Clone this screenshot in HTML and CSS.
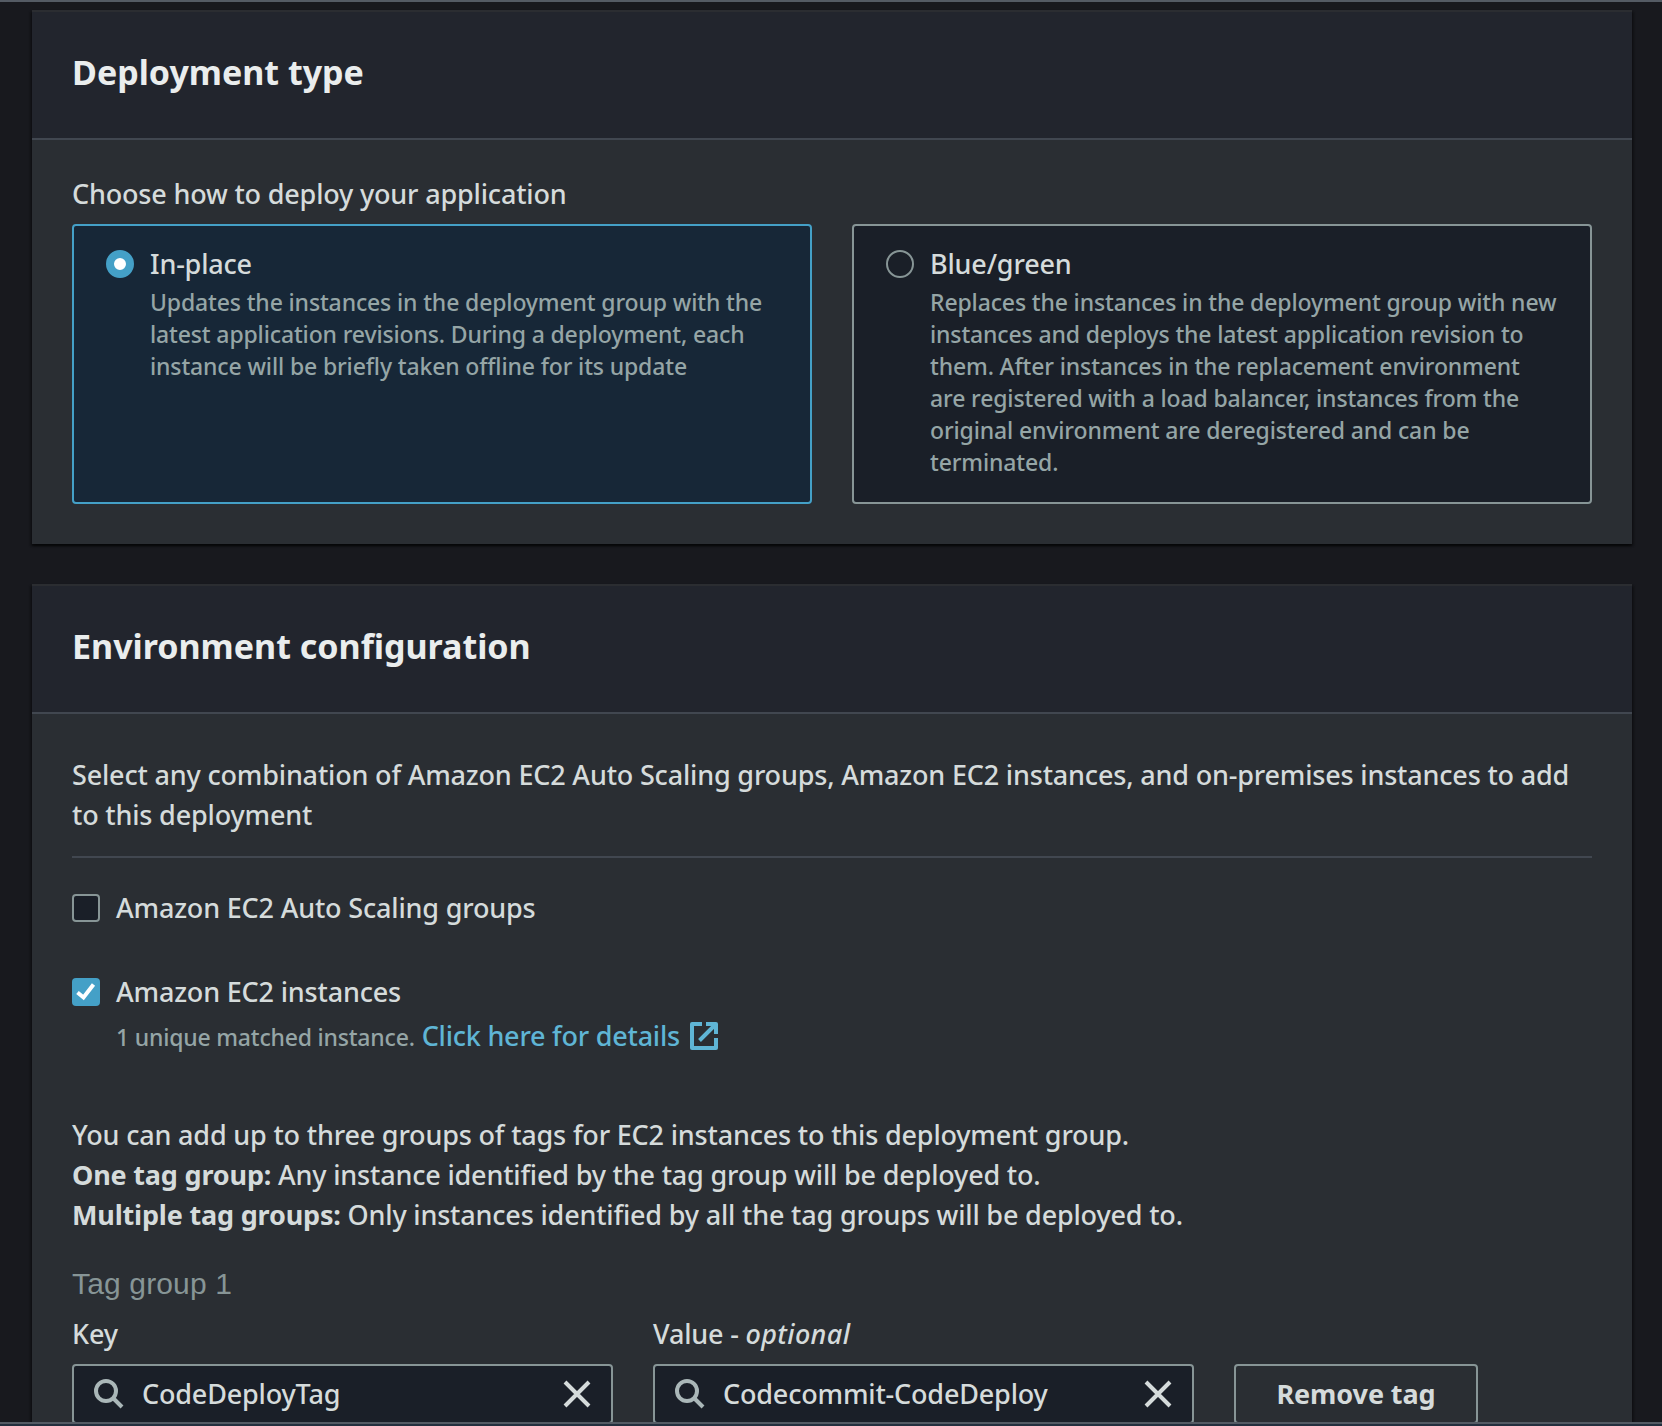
FILE: index.html
```
<!DOCTYPE html>
<html lang="en">
<head>
<meta charset="utf-8">
<title>Create deployment group</title>
<link rel="stylesheet" href="styles.css">
</head>
<body>
<main class="page">
  <section class="panel">
    <header class="panel-header"><h2>Deployment type</h2></header>
    <div class="panel-body deploy">
      <div class="label">Choose how to deploy your application</div>
      <div class="tiles">
        <label class="tile selected">
          <span class="radio on"></span>
          <span class="tile-text">
            <span class="tile-title">In-place</span>
            <span class="desc">Updates the instances in the deployment group with the<br>latest application revisions. During a deployment, each<br>instance will be briefly taken offline for its update</span>
          </span>
        </label>
        <label class="tile">
          <span class="radio"></span>
          <span class="tile-text">
            <span class="tile-title">Blue/green</span>
            <span class="desc">Replaces the instances in the deployment group with new<br>instances and deploys the latest application revision to<br>them. After instances in the replacement environment<br>are registered with a load balancer, instances from the<br>original environment are deregistered and can be<br>terminated.</span>
          </span>
        </label>
      </div>
    </div>
  </section>

  <section class="panel">
    <header class="panel-header"><h2>Environment configuration</h2></header>
    <div class="panel-body env">
      <p class="intro">Select any combination of Amazon EC2 Auto Scaling groups, Amazon EC2 instances, and on-premises instances to add<br>to this deployment</p>
      <label class="check-row"><span class="checkbox"></span><span>Amazon EC2 Auto Scaling groups</span></label>
      <label class="check-row second">
        <span class="checkbox checked"><svg viewBox="0 0 28 28"><path d="M5.500 14.500L11.500 19.500L21.500 6.500" fill="none" stroke="#fff" stroke-width="4"/></svg></span>
        <span>Amazon EC2 instances</span>
      </label>
      <div class="match"><span class="hint">1 unique matched instance.</span><a class="link">Click here for details</a>
        <svg class="ext" viewBox="0 0 28 28" fill="none" stroke="currentColor" stroke-width="4"><path d="M12 2H2V26H26V16M16 2H26V12M25 3L9.500 18.500"/></svg>
      </div>
      <p class="help">You can add up to three groups of tags for EC2 instances to this deployment group.<br><b>One tag group:</b> Any instance identified by the tag group will be deployed to.<br><b>Multiple tag groups:</b> Only instances identified by all the tag groups will be deployed to.</p>
      <div class="group-title">Tag group 1</div>
      <div class="fields">
        <div class="field">
          <div class="label">Key</div>
          <div class="input">
            <svg class="search" viewBox="0 0 30 30" fill="none" stroke="currentColor" stroke-width="4"><circle cx="12" cy="12" r="10"/><path d="M19 19L28 28"/></svg>
            <span class="value">CodeDeployTag</span>
            <svg class="clear" viewBox="0 0 28 28" fill="none" stroke="currentColor" stroke-width="4"><path d="M2 2L26 26M26 2L2 26"/></svg>
          </div>
        </div>
        <div class="field">
          <div class="label">Value - <i>optional</i></div>
          <div class="input">
            <svg class="search" viewBox="0 0 30 30" fill="none" stroke="currentColor" stroke-width="4"><circle cx="12" cy="12" r="10"/><path d="M19 19L28 28"/></svg>
            <span class="value">Codecommit-CodeDeploy</span>
            <svg class="clear" viewBox="0 0 28 28" fill="none" stroke="currentColor" stroke-width="4"><path d="M2 2L26 26M26 2L2 26"/></svg>
          </div>
        </div>
        <button class="remove">Remove tag</button>
      </div>
    </div>
  </section>
</main>
<div class="footer-bar"></div>
</body>
</html>
```
FILE: styles.css
```
* { box-sizing: border-box; }
html, body { margin: 0; height: 1426px; overflow: hidden; }
body {
  background: #18191e;
  color: #d5dbdb;
  font: 500 27px/40px "Noto Sans", "Open Sans", sans-serif;
  letter-spacing: -0.18px;
}
p, h2 { margin: 0; }
.page {
  height: 1426px;
  overflow: hidden;
  border-top: 2px solid #545b64;
  padding: 8px 30px 0 32px;
  display: flex;
  flex-direction: column;
  gap: 40px;
}
.panel {
  flex: none;
  background: #2a2e33;
  border-top: 2px solid #2b2d31;
  box-shadow: 0 2px 2px rgba(0, 0, 0, .5), 2px 2px 2px rgba(0, 0, 0, .25), -2px 2px 2px rgba(0, 0, 0, .25);
}
.panel-header {
  height: 128px;
  padding: 38px 40px 0;
  background: #22252d;
  border-bottom: 2px solid #414750;
}
.panel-header h2 {
  font-size: 34px;
  line-height: 44px;
  font-weight: 700;
  letter-spacing: 0;
  color: #eaeded;
}
.panel-body { padding: 0 40px; }
.deploy { padding: 34px 40px 40px; }
.tiles {
  display: grid;
  grid-template-columns: 1fr 1fr;
  gap: 40px;
  margin-top: 10px;
}
.tile {
  display: flex;
  gap: 16px;
  height: 280px;
  padding: 18px 20px 0 32px;
  border: 2px solid #879596;
  border-radius: 4px;
  background: #1a1f28;
}
.tile.selected { border-color: #44a0c7; background: #172737; }
.radio {
  flex: none;
  width: 28px;
  height: 28px;
  margin-top: 6px;
  border: 2px solid #879596;
  border-radius: 50%;
}
.radio.on { border: 8px solid #44a0c7; background: #fff; }
.tile-title { display: block; }
.desc {
  display: block;
  margin-top: 2px;
  font-size: 23px;
  line-height: 32px;
  letter-spacing: -0.14px;
  color: #95a5a6;
  white-space: nowrap;
}
.env { padding-top: 41px; }
.intro {
  padding-bottom: 21px;
  border-bottom: 2px solid #414750;
  white-space: nowrap;
}
.check-row { display: flex; gap: 16px; margin-top: 30px; }
.check-row.second { margin-top: 44px; }
.checkbox {
  flex: none;
  width: 28px;
  height: 28px;
  margin-top: 6px;
  border: 2px solid #879596;
  border-radius: 4px;
  background: #1a1f28;
}
.checkbox.checked { border: 0; background: #44a0c7; }
.checkbox svg { display: block; }
.match {
  display: flex;
  align-items: baseline;
  margin: 4px 0 0 44px;
  height: 40px;
}
.hint { font-size: 23px; letter-spacing: -0.2px; color: #95a5a6; margin-right: 7px; }
.link { color: #5fb5d5; letter-spacing: -0.23px; }
.ext {
  width: 28px;
  height: 28px;
  margin: 6px 0 0 10px;
  align-self: flex-start;
  border-radius: 2px;
  color: #5fb5d5;
}
.help { margin-top: 59px; white-space: nowrap; }
.group-title {
  margin-top: 29px;
  font: 400 30px/40px "Liberation Sans", Arial, sans-serif;
  letter-spacing: 0.15px;
  color: #879596;
}
.fields { display: flex; gap: 40px; margin-top: 10px; align-items: flex-end; }
.field { width: 541px; }
.label i { letter-spacing: 0.35px; }
.input {
  display: flex;
  align-items: center;
  height: 60px;
  margin-top: 10px;
  padding: 0 20px;
  border: 2px solid #879596;
  border-radius: 4px;
  background: #1a1f28;
}
.search { width: 30px; height: 30px; color: #aab7b8; }
.clear { width: 28px; height: 28px; }
.value { flex: 1; margin-left: 18px; }
.remove {
  width: 244px;
  height: 60px;
  padding: 0;
  border: 2px solid #879596;
  border-radius: 4px;
  background: transparent;
  color: #d5dbdb;
  font: 700 27px/40px "Noto Sans", sans-serif;
  letter-spacing: -0.1px;
}
.footer-bar {
  position: fixed;
  left: 0;
  right: 0;
  bottom: 0;
  height: 4px;
  background: #232f3e;
  border-top: 2px solid #545b64;
}
```
